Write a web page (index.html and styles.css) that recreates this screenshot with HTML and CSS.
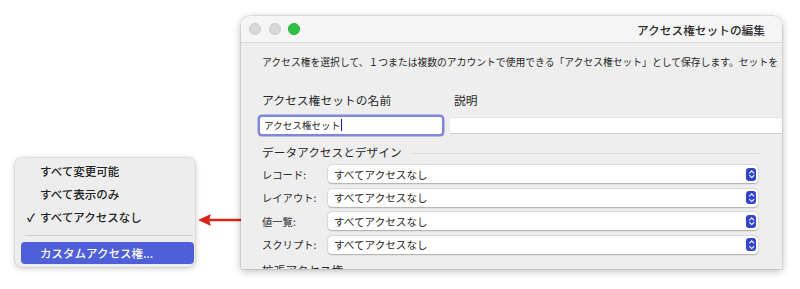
FILE: index.html
```html
<!DOCTYPE html>
<html lang="ja">
<head>
  <meta charset="UTF-8">
  <title>アクセス権セットの編集</title>
  <link rel="stylesheet" href="styles.css">
</head>
<body>
  <div class="figure">
    <div class="menu">
      <div class="menu-item">すべて変更可能</div>
      <div class="menu-item">すべて表示のみ</div>
      <div class="menu-item checked"><span class="check">✓</span>すべてアクセスなし</div>
      <div class="menu-sep"></div>
      <div class="menu-item active">カスタムアクセス権...</div>
    </div>

    <svg class="arrow" width="46" height="16" viewBox="0 0 46 16">
      <line x1="12" y1="8" x2="46" y2="8" stroke="#d8261c" stroke-width="2.4"/>
      <polygon points="3,8 16,2 14,8 16,14" fill="#d8261c"/>
    </svg>

    <div class="window">
      <div class="titlebar">
        <div class="lights">
          <span class="light"></span>
          <span class="light"></span>
          <span class="light green"></span>
        </div>
        <div class="title">アクセス権セットの編集</div>
      </div>

      <div class="content">
        <p class="intro">アクセス権を選択して、１つまたは複数のアカウントで使用できる「アクセス権セット」として保存します。セットを</p>

        <div class="fields">
          <div class="field name">
            <label>アクセス権セットの名前</label>
            <div class="input focused">アクセス権セット<span class="caret"></span></div>
          </div>
          <div class="field desc">
            <label>説明</label>
            <div class="input plain"></div>
          </div>
        </div>

        <div class="section">
          <h2>データアクセスとデザイン</h2>
          <div class="rule"></div>
        </div>

        <div class="rows">
          <div class="row">
            <span class="row-label">レコード:</span>
            <div class="select">すべてアクセスなし<span class="stepper"></span></div>
          </div>
          <div class="row">
            <span class="row-label">レイアウト:</span>
            <div class="select">すべてアクセスなし<span class="stepper"></span></div>
          </div>
          <div class="row">
            <span class="row-label">値一覧:</span>
            <div class="select">すべてアクセスなし<span class="stepper"></span></div>
          </div>
          <div class="row">
            <span class="row-label">スクリプト:</span>
            <div class="select">すべてアクセスなし<span class="stepper"></span></div>
          </div>
        </div>

        <div class="section next">
          <h2>拡張アクセス権</h2>
        </div>
      </div>
    </div>
  </div>
</body>
</html>
```

FILE: styles.css
```css
* {
  box-sizing: border-box;
}

html, body {
  margin: 0;
  width: 800px;
  height: 289px;
  overflow: hidden;
  background: white;
  font-family: "Noto Sans CJK JP", "Noto Sans", sans-serif;
  color: #262626;
}

.figure {
  display: flex;
  align-items: flex-start;
  padding-left: 15px;
}

/* popup menu */
.menu {
  width: 180px;
  margin-top: 158px;
  padding: 2px 1px 3px 6px;
  background: #ededed;
  border-radius: 6px;
  box-shadow: 0 1px 6px rgba(0, 0, 0, 0.22), 0 0 0 0.5px rgba(0, 0, 0, 0.12);
}

.menu-item {
  height: 23px;
  line-height: 23px;
  padding-left: 19px;
  font-size: 11.5px;
  font-weight: 500;
  color: #222;
  position: relative;
}

.menu-item .check {
  position: absolute;
  left: 6px;
  top: 0;
  font-size: 11px;
  font-weight: bold;
}

.menu-sep {
  height: 1px;
  margin: 6px 1px 6px 4px;
  background: #d2d2d2;
}

.menu-item.active {
  height: 22px;
  line-height: 22px;
  background: #4f5fda;
  color: white;
  border-radius: 4px;
}

.arrow {
  margin-top: 212px;
  flex: none;
}

/* window */
.window {
  width: 541px;
  height: 253px;
  margin-top: 16px;
  background: #eeeeee;
  border-radius: 9px 9px 0 0;
  overflow: hidden;
  box-shadow: 0 2px 9px rgba(0, 0, 0, 0.28), 0 0 0 0.5px rgba(0, 0, 0, 0.15);
}

.titlebar {
  height: 27px;
  display: flex;
  align-items: center;
  justify-content: space-between;
  padding: 0 17px 0 8px;
  background: #f5f5f5;
  border-bottom: 1px solid #dadada;
}

.lights {
  display: flex;
  gap: 7.5px;
}

.light {
  width: 12px;
  height: 12px;
  border-radius: 50%;
  background: #d8d8d8;
  border: 0.5px solid #c9c9c9;
}

.light.green {
  background: #2ec244;
  border-color: #27a83a;
}

.title {
  font-size: 11.7px;
  font-weight: 500;
  color: #2c2c2c;
}

.content {
  padding-left: 21px;
}

.intro {
  margin: 13px 0 0;
  font-size: 9.8px;
  line-height: 12px;
  white-space: nowrap;
  color: #262626;
}

.fields {
  display: flex;
  gap: 8px;
  margin-top: 24px;
  margin-left: -4px;
}

.field label {
  display: block;
  height: 16px;
  line-height: 16px;
  font-size: 11.8px;
  padding-left: 4px;
  margin-bottom: 9px;
}

.field.name {
  width: 184px;
  flex: none;
}

.field.desc {
  width: 360px;
  flex: none;
}

.input {
  height: 17px;
  background: white;
  font-size: 9.6px;
  line-height: 17px;
  padding-left: 4px;
}

.input.focused {
  margin-left: 2px;
  border-radius: 2px;
  box-shadow: 0 0 0 2.5px #7f87da;
}

.caret {
  display: inline-block;
  width: 1px;
  height: 12px;
  margin-left: 1px;
  vertical-align: -2px;
  background: #1b1bcc;
}

.input.plain {
  border-bottom: 1px solid #cfcfcf;
  border-top: 1px solid #e4e4e4;
}

.section {
  display: flex;
  align-items: center;
  gap: 9px;
  margin-top: 10px;
  padding-right: 22px;
}

.section h2 {
  margin: 0;
  font-size: 11.7px;
  font-weight: normal;
  line-height: 16px;
  white-space: nowrap;
}

.rule {
  flex: 1;
  height: 1px;
  margin-top: 3px;
  background: #dcdcdc;
}

.rows {
  display: flex;
  flex-direction: column;
  gap: 4.6px;
  margin-top: 4.5px;
}

.row {
  display: flex;
  align-items: center;
  height: 19px;
}

.row-label {
  width: 66px;
  font-size: 10.3px;
  color: #2a2a2a;
}

.select {
  width: 430px;
  height: 18px;
  display: flex;
  align-items: center;
  justify-content: space-between;
  padding: 0 2px 0 6px;
  font-size: 10.6px;
  background: white;
  border-radius: 4px;
  box-shadow: 0 0.5px 1.5px rgba(0, 0, 0, 0.25), 0 0 0 0.5px rgba(0, 0, 0, 0.08);
}

.stepper {
  width: 10px;
  height: 13px;
  border-radius: 3px;
  background: #3344cc;
  position: relative;
}

.stepper::before,
.stepper::after {
  content: "";
  position: absolute;
  left: 3.5px;
  width: 2.5px;
  height: 2.5px;
  border-left: 1px solid white;
  border-top: 1px solid white;
}

.stepper::before {
  top: 3px;
  transform: rotate(45deg);
}

.stepper::after {
  bottom: 3px;
  transform: rotate(225deg);
}

.section.next {
  margin-top: 8px;
}
```
